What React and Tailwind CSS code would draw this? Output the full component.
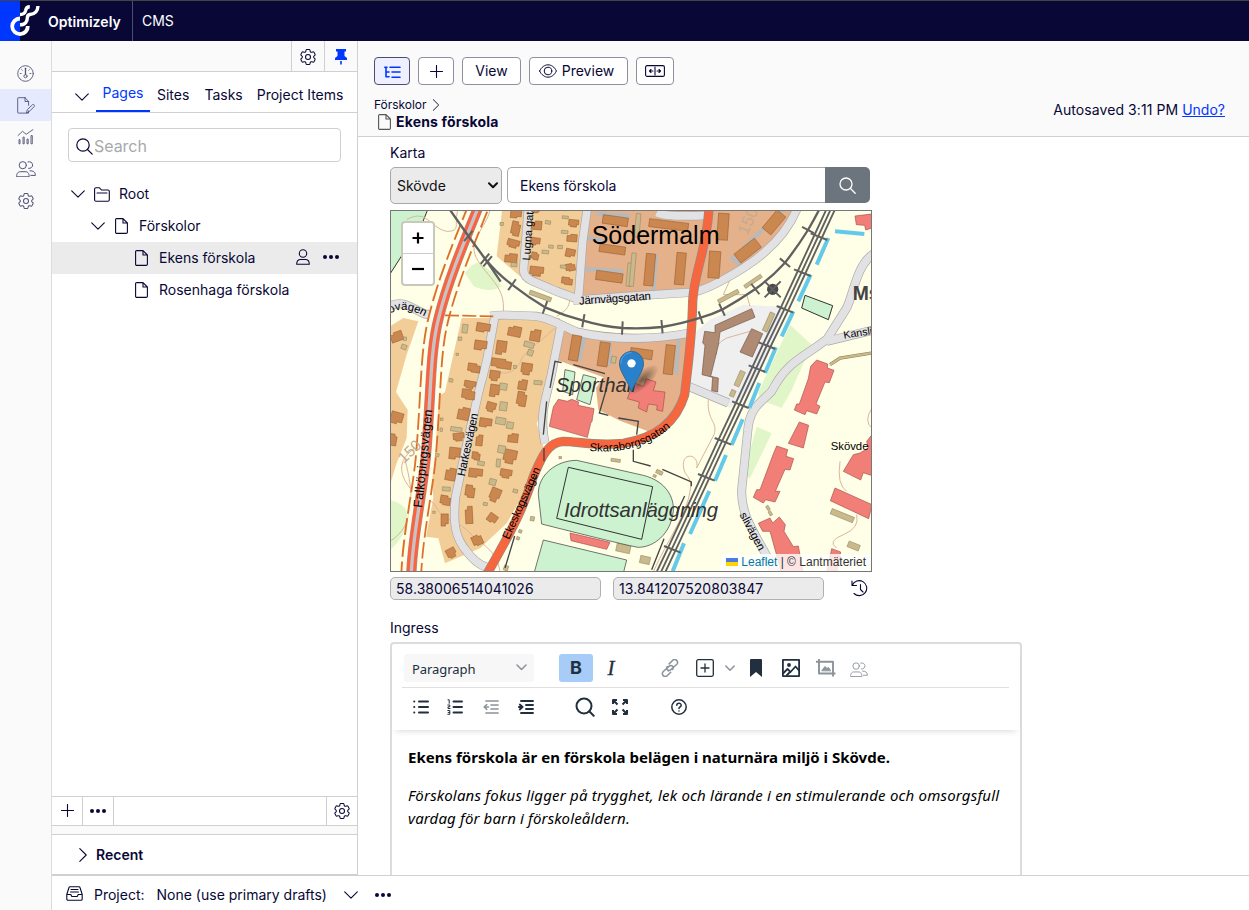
import React from "react";
import { HiOutlineCog6Tooth } from "react-icons/hi2";

const Gear = () => <HiOutlineCog6Tooth size={20} strokeWidth={1.2} className="[&_path]:[stroke-width:1.25]" />;

const Ico = ({ w = 16, h = 16, sw = 1.1, vb, className = "", children, fill = "none" }) => (
  <svg width={w} height={h} viewBox={vb || `0 0 ${w} ${h}`} className={`block shrink-0 ${className}`} fill={fill} stroke="currentColor" strokeWidth={sw} strokeLinecap="round" strokeLinejoin="round">
    {children}
  </svg>
);

const Page = ({ className }) => (
  <Ico w={13} h={16} className={className}><path d="M2.500.6H8L12.400 5v9a1.200 1.200 0 0 1-1.200 1.400H2A1.200 1.200 0 0 1 .6 14V2A1.200 1.200 0 0 1 2 .6zM8 .6V5h4.400" /></Ico>
);
const ChevD = ({ className }) => <Ico w={14} h={8} className={className}><path d="M.7.8 7 7.2 13.3.8" /></Ico>;
const ChevR = ({ className }) => <Ico w={8} h={14} className={className}><path d="M.8.7 7.2 7 .8 13.3" /></Ico>;
const Plus = () => <Ico w={13} h={13}><path d="M6.5.5v12M.5 6.5h12" /></Ico>;
const Dots = () => (
  <Ico w={16} h={4} fill="currentColor" sw={0}><circle cx="2" cy="2" r="2" /><circle cx="8" cy="2" r="2" /><circle cx="14" cy="2" r="2" /></Ico>
);
const Users = ({ w = 20, h = 16, className, sw = 1 }) => (
  <Ico w={w} h={h} vb="0 0 20 16" className={className} sw={sw}>
    <circle cx="6.8" cy="4.2" r="3.6" />
    <path d="M.6 15.4c0-3.6 1.8-4.7 4-4.7h4.6c2.2 0 4 1.1 4 4.7zM12 .9a3.4 3.4 0 1 1 .6 6.5M14 9.8c3 0 5.4 1 5.4 4.6h-4.6" />
  </Ico>
);
const Gauge = () => (
  <Ico w={17} h={17} sw={0.9}>
    <circle cx="8.500" cy="8.500" r="7.800" /><circle cx="8.500" cy="11.200" r="1.600" /><path d="M8.500 9.500V3.300" strokeWidth="1.300" /><path d="M3.200 8.500h.9M13 8.500h.9M4.700 4.700l.6.6M12.300 4.700l-.6.6" />
  </Ico>
);
const PageEdit = () => (
  <Ico w={18} h={17} sw={0.9}>
    <path d="M8 .7H1.300a.6.6 0 0 0-.6.6v14.200a.6.6 0 0 0 .6.6h10.200V14M8 .7l3.600 3.800v3.800M8 .7v3.800h3.600M9.500 15.500l.8-2.800 5.300-5.100c.9-.8 2.600.8 1.700 1.900L12 14.700z" />
  </Ico>
);
const Chart = () => (
  <Ico w={17} h={16} sw={0.9}>
    <path d="M1 6.500l4.500-4.200 3.700 3L16 .6M2 11v3.800h1V11zM6 8.500v6.300h1.200V8.500zM10 10.500v4.300h1.200v-4.300zM14 7v7.800h1.300V7z" />
  </Ico>
);

/* ---------- map data: [cx, cy, w, h, rotation] ---------- */
const houses = [
  [378, 18, 30, 22, 5], [377, 62, 24, 40, 12], [370, 107, 34, 22, 15], [363, 150, 34, 24, 5], [440, 52, 28, 24, 5], [436, 100, 26, 20, 8],
  [435, 144, 20, 20, 12], [440, 190, 38, 26, 6], [551, 46, 28, 20, 5], [546, 90, 28, 20, 5], [541, 135, 26, 22, 12], [541, 178, 26, 20, -10], [531, 219, 30, 20, 6], [437, 8, 22, 12, 0],
  [20, 386, 34, 26, -20], [280, 359, 38, 24, 10], [272, 412, 34, 26, 8], [252, 480, 34, 24, 8], [240, 530, 32, 20, 10], [374, 370, 36, 28, 12], [436, 382, 28, 32, 10],
  [334, 419, 28, 38, 8], [334, 467, 56, 26, 8], [314, 503, 28, 28, 8], [410, 483, 30, 32, 8], [398, 530, 24, 28, 10], [314, 548, 26, 34, 8], [235, 559, 36, 28, 6],
  [395, 573, 26, 40, 10], [303, 597, 26, 26, 16], [221, 617, 32, 34, 12], [287, 644, 34, 24, 8], [20, 630, 34, 32, 16], [8, 695, 22, 32, 10], [206, 687, 30, 22, -6],
  [268, 697, 18, 30, 6], [369, 690, 28, 24, 6], [194, 736, 30, 32, 6], [258, 744, 22, 22, 8], [360, 746, 36, 38, 12], [348, 797, 32, 24, 10], [182, 799, 28, 34, 10],
  [257, 795, 38, 24, 6], [240, 850, 26, 34, 8], [166, 877, 28, 26, 10], [315, 861, 28, 38, 22], [237, 921, 20, 48, -3], [164, 936, 20, 34, 0], [307, 931, 26, 24, 36],
  [262, 997, 28, 28, -25], [184, 1035, 26, 26, -28],
];
const sheds = [
  [335, 48, 10, 10, 0], [372, 170, 18, 12, 5], [474, 43, 16, 10, 10], [526, 28, 18, 8, 5], [524, 72, 20, 9, 5], [466, 132, 20, 10, 5], [510, 117, 15, 10, 5], [520, 176, 18, 9, 5], [483, 116, 14, 9, 5],
  [225, 362, 16, 26, 8], [42, 417, 16, 14, 20], [45, 392, 10, 10, 0], [417, 410, 30, 16, 15], [421, 434, 16, 18, 20], [210, 392, 11, 10, 0], [202, 439, 8, 7, 0], [183, 517, 11, 10, 10],
  [375, 477, 10, 9, 0], [340, 536, 22, 20, 8], [444, 524, 24, 12, 5], [340, 595, 22, 26, 8], [332, 639, 30, 20, 10], [360, 652, 20, 20, 10], [199, 664, 34, 13, 8], [155, 634, 8, 8, 0], [154, 665, 8, 10, 0],
  [335, 724, 22, 22, 12], [273, 766, 20, 12, 10], [325, 765, 12, 24, 5], [141, 741, 12, 9, 10], [169, 843, 24, 12, 4], [308, 822, 20, 18, 14], [376, 849, 14, 10, 14], [286, 888, 12, 9, 5],
  [132, 913, 7, 7, 0], [451, 264, 68, 13, 20], [671, 455, 14, 20, 10], [718, 200, 14, 70, 5], [743, 52, 14, 70, 5], [728, 185, 13, 100, 5], [1015, 265, 68, 12, -28], [1089, 220, 60, 11, -34],
  [1136, 342, 15, 60, 24], [1049, 512, 16, 48, 24], [1028, 556, 14, 20, 24], [677, 757, 28, 9, 8], [511, 749, 8, 7, 0], [700, 1021, 42, 24, 12], [427, 932, 12, 13, 10], [391, 970, 9, 9, 20],
  [384, 991, 9, 9, 20], [348, 1080, 13, 15, 20], [1357, 923, 72, 17, 22], [1391, 1014, 36, 18, 22], [808, 793, 20, 11, 25], [794, 804, 9, 7, 25], [765, 1056, 30, 22, 12], [1134, 900, 8, 14, -30], [1141, 916, 8, 14, -30],
];
const blocks = [
  [676, 38, 76, 26, 8], [667, 124, 78, 24, 8], [658, 206, 80, 28, 8], [836, 51, 118, 24, 7], [779, 185, 28, 96, 5], [871, 182, 28, 96, 5], [973, 170, 34, 80, 4], [999, 56, 32, 80, 4],
  [1152, 43, 34, 70, 40], [1073, 128, 78, 34, -38], [555, 420, 28, 76, 10], [641, 439, 30, 72, 8], [754, 437, 66, 28, 8], [838, 455, 28, 88, 6],
];
const Rects = ({ data, fill, stroke }) => data.map(([x, y, w, h, r], i) => (
  <rect key={i} x={x - w / 2} y={y - h / 2} width={w} height={h} transform={`rotate(${r} ${x} ${y})`} fill={fill} stroke={stroke} strokeWidth="1.500" />
));
/* house outlines: a rectangle with one or two notched corners */
const shapes = [
  "M-.5-.5H.5V.3H.1V.5H-.5z",
  "M-.5-.3H-.15V-.5H.5V.5H-.5z",
  "M-.5-.5H.5V.15H.3V.5H-.3V.3H-.5z",
  "M-.5-.5H.2V-.3H.5V.5H-.2V.35H-.5z",
];
const Houses = () => houses.map(([x, y, w, h, r], i) => (
  <path key={i} d={shapes[(i * 7 + (i >> 2)) % 4]} transform={`translate(${x} ${y}) rotate(${r}) scale(${w * 1.08} ${h * 1.08})`} fill="#cb8750" stroke="#8d5526" strokeWidth="0.5" vectorEffect="non-scaling-stroke" />
));
const ticksArc = [[235, 84, 40], [285, 152, 40], [293, 160, 40], [366, 230, 35], [465, 298, 20], [580, 338, 10], [697, 360, 3], [816, 356, -5], [932, 329, -18], [996, 305, -25], [1096, 243, -38], [1185, 164, -50], [1254, 66, -62]];
const ticksMain = [[1290, 84], [1240, 192], [1188, 302], [1134, 411], [1104, 480], [1054, 588], [1002, 698], [952, 806], [850, 1022]];
const arcRail = "M176 0L235 84 285 152Q320 195 366 230Q415 268 465 298Q520 322 580 338Q640 356 697 360Q760 363 816 357Q880 346 932 329Q965 320 996 305Q1050 275 1096 243Q1145 208 1185 164Q1220 120 1254 66Q1275 30 1290 0";
const mainRail = "M1324 0L1285 84 1235 192 1184 302 1131 411 1099 480 1049 588 997 698 947 806 846 1022 812 1094";
const greyRoads = [
  "M415 0L401 180Q398 206 425 218L500 250 560 272", "M592 0L578 100 565 275", "M550 277L760 262 905 253Q950 248 1060 180C1130 135 1190 80 1222 0",
  "M303 324Q320 318 440 325C480 330 520 355 560 372C640 390 760 400 895 376", "M315 322L290 460 265 556 220 756 196 870C190 940 192 985 230 1030Q260 1070 292 1078",
  "M512 358L482 510C465 580 448 620 465 706", "M0 295C40 272 70 305 105 318L145 322", "M1450 138C1400 170 1390 260 1370 300L1312 392C1240 450 1190 460 1145 550C1110 585 1078 600 1073 670L1055 846C1052 930 1100 980 1160 1100",
  "M1310 400L1450 366", "M800 14Q830 28 950 22", "M895 535L1015 585",
];
const redRoad = "M957 0C950 130 912 190 908 280C906 400 890 500 884 560C860 640 800 690 700 706C620 715 560 700 520 700C470 702 450 760 430 806C400 900 370 960 292 1096";
const falk = "M264 0C215 120 170 230 146 330C120 430 124 550 108 740C100 840 68 980 64 1096";
const blue = "M1315 90L1280 170M1262 200L1225 280M1210 310L1175 385M1158 418L1125 495M1108 525L1078 600M1058 634L1025 711M1008 741L975 818M958 849L900 978M882 1006L848 1090M1335 70L1423 78";

const MapDrawing = () => (
  <svg viewBox="3 9 1440 1080" className="block h-[360px] w-[480px]" fontFamily="'Liberation Sans', Arial, sans-serif">
    <defs><radialGradient id="shade"><stop offset="0" stopColor="#000" stopOpacity=".5" /><stop offset="1" stopColor="#000" stopOpacity="0" /></radialGradient></defs>
    <rect x="0" y="0" width="1446" height="1096" fill="#fffee6" />
    <path d="M0 0H115L95 50 0 198z" fill="#cdf2d0" stroke="#333" strokeWidth="3" />
    <g fill="#e1f6c8">
      <path d="M205 0H250L232 25z" /><path d="M225 195Q250 160 270 165L310 195 335 235Q300 258 250 233z" /><path d="M1200 350L1265 410 1205 546 1175 600 1110 575 1105 552z" />
      <path d="M1100 656L1145 676 1080 811 1060 800z" /><path d="M0 876Q60 890 52 940T0 1026z" />
    </g>
    <g fill="#f2cd98">
      <path d="M337 0H590V270L560 272 460 245 390 205 320 145z" />
      <path d="M0 355L40 330 85 340 50 440 18 552 53 606 50 690 20 765 0 830z" />
      <path d="M215 330H510L485 552 440 646 460 716 430 806 350 946 270 1021 165 1066 145 991 108 986 130 870 120 706 138 570 165 552 190 440z" />
    </g>
    <g fill="#e5b18b">
      <path d="M590 0H1215C1180 90 1120 150 1060 180 980 230 950 250 905 253L565 275z" /><path d="M525 365L900 390 890 546C860 620 820 660 780 672L690 638 625 605 618 540 640 508 500 455z" />
    </g>
    <path d="M905 380L960 335 1060 290 1190 297 1145 400 1075 552 1020 600 890 540z" fill="#efeff0" />
    <g fill="none" stroke="#d9b69c" strokeWidth="3">
      <path d="M205 0C190 50 215 70 170 70C120 60 110 0 50 35M300 6C290 60 225 100 265 160S345 240 340 310M560 250C520 280 560 290 500 325M495 360C430 420 400 430 390 465Q370 500 330 495M590 240Q620 250 640 205L690 160" />
      <path d="M75 720C30 750 20 790 60 840S120 860 140 900S210 940 240 975S320 1020 330 1092M45 755C70 850 80 950 0 1000M1020 60L1025 160M1080 370L1010 390Q970 410 980 440M1080 295L1070 260 1000 260 1018 220" />
      <path d="M955 575C950 640 985 640 972 680L920 780C930 740 880 730 880 770S910 800 900 850C890 920 830 1000 790 1092M1446 600Q1420 640 1446 660M1350 760Q1340 830 1370 850M1400 920Q1410 960 1360 980T1340 1020" />
    </g>
    <g stroke="#b9b9b9" strokeWidth="13" fill="none"><path d="M620 18L720 24M590 90L640 98M585 183L700 190M798 140L790 248M582 388L568 458M660 405L655 475M866 395L858 500M1022 145L1050 170M1060 120L1180 6" /></g>
    <g fill="none" stroke="#a9a9a9" strokeWidth="27">{greyRoads.map((d) => <path key={d} d={d} />)}</g>
    <g fill="none" stroke="#e2e2e4" strokeWidth="23">{greyRoads.map((d) => <path key={d} d={d} />)}</g>
    <Houses />
    <Rects data={sheds} fill="#c9b98c" stroke="#8e8058" />
    <Rects data={blocks} fill="#cb8750" stroke="#8d5526" />
    <g fill="#b08b74" stroke="#76553f" strokeWidth="2">
      <path d="M975 352L1085 302 1095 328 990 372 985 412 962 505 985 510 983 552 965 548 968 508 936 500 945 412 938 405 944 370 975 374z" /><path d="M1085 362L1118 377 1087 447 1050 432z" />
    </g>
    <path d="M1320 470L1350 450 1446 435" fill="none" stroke="#8e8058" strokeWidth="10" /><path d="M1320 470L1350 450 1446 435" fill="none" stroke="#c9b98c" strokeWidth="7" />
    <g fill="#cdf2d0" stroke="#333" strokeWidth="2">
      <path d="M525 485L555 492 548 560 518 550zM580 500L618 510 600 590 560 575z" /><path d="M1245 262L1328 293 1315 335 1235 300z" strokeWidth="3" />
      <path d="M455 948L445 860C443 800 500 757 560 757L760 802C830 820 853 870 850 910C842 980 790 1018 745 1018Q720 1015 455 948z" /><path d="M535 778L788 836 755 994 500 931z" strokeWidth="3" /><path d="M460 996L710 1056 700 1096H432z" />
    </g>
    <g fill="#f17f78" stroke="#a84f49" strokeWidth="2">
      <path d="M490 597L505 574 532 580 545 574 566 582 564 592 612 602 606 640 602 646 592 688 478 655z" />
      <path d="M540 975L660 1003 650 1024 543 998z" />
      <path d="M712 572L730 524 760 535 768 512 798 522 790 548 825 552 818 610 800 606 802 592 775 588 770 612 745 600 748 582z" />
      <path d="M1395 24L1446 18V60L1427 66 1424 52 1399 50z" />
      <path d="M1280 456L1313 468 1312 480 1332 487 1318 524 1305 522 1278 588 1290 595 1280 618 1250 608 1245 620 1213 606 1220 588 1228 588 1255 512 1262 475z" />
      <path d="M1228 642L1256 652 1240 720 1195 706z" />
      <path d="M1160 714L1193 725 1188 745 1211 752 1200 786 1185 784 1156 850 1170 850 1155 882 1127 875 1120 885 1090 868 1100 845 1110 845 1150 738z" />
      <path d="M1105 946L1140 930 1148 945 1168 927 1186 950 1182 970 1210 1016 1225 1014 1240 1096H1175L1140 970 1118 970z" />
      <path d="M1446 680L1430 700 1435 720 1410 735 1390 740 1360 790 1412 816 1420 794 1446 803z" />
      <path d="M1335 840L1446 890 1436 932 1321 878z" /><path d="M1325 1022L1352 1032 1340 1096H1310z" />
    </g>
    <path d={falk} fill="none" stroke="#dd6f2c" strokeWidth="65" strokeDasharray="50 14" />
    <path d={falk} fill="none" stroke="#fffee6" strokeWidth="54" />
    <path d={falk} fill="none" stroke="#9a9a9a" strokeWidth="31" /><path d={falk} fill="none" stroke="#fb6240" strokeWidth="28" /><path d={falk} fill="none" stroke="#c9c2c4" strokeWidth="10" />
    <path d="M165 322L310 325" stroke="#dd6f2c" strokeWidth="5" strokeDasharray="42 10" />
    <path d={redRoad} fill="none" stroke="#8e8e8e" strokeWidth="28" /><path d={redRoad} fill="none" stroke="#f6663f" strokeWidth="24" />
    <path d={blue} fill="none" stroke="#62c9ea" strokeWidth="12" />
    <g fill="none" stroke="#606060">
      <path d={arcRail} strokeWidth="7" /><path d="M285 152L332 221" strokeWidth="7" />
      <path d={mainRail} strokeWidth="5.500" transform="translate(-13 0)" /><path d={mainRail} strokeWidth="5.500" /><path d={mainRail} strokeWidth="5.500" transform="translate(13 0)" />
      {ticksArc.map(([x, y, r]) => <path key={x} d={`M${x} ${y - 20}v40`} transform={`rotate(${r} ${x} ${y})`} strokeWidth="6" />)}
      {ticksMain.map(([x, y]) => <path key={x} d={`M${x - 28} ${y - 8}l50 20`} strokeWidth="6" />)}
      <circle cx="1148" cy="244" r="17" fill="#4a4a4a" stroke="none" /><path d="M1124 220L1172 268M1172 220L1124 268" strokeWidth="6" />
    </g>
    <g fill="none" stroke="#444" strokeWidth="4">
      <path d="M480 540L495 460 515 464M550 470L645 497M470 580L460 680M462 720V760M650 540L628 615 655 622M685 630L745 640 740 680M730 725V760L782 774M817 784L904 822V835M884 864L860 915M374 984L345 1080M822 992L785 1085" />
      <path d="M400 900L440 800" />
    </g>
    <g fontSize="34">
      <text x="605" y="107" fontSize="75">Södermalm</text>
      <text x="0" y="0" fontSize="33" transform="translate(420 158) rotate(-86)">Lugna gat</text>
      <text transform="translate(568 290) rotate(-4)" fontSize="34" textLength="216">Järnvägsgatan</text>
      <path id="ov" d="M0 317Q45 286 125 338" fill="none" /><text fontSize="34"><textPath href="#ov" textLength="110">ovägen</textPath></text>
      <text transform="translate(1362 392) rotate(-9)" fontSize="32">Kansli</text>
      <text transform="translate(96 900) rotate(-84)" fontSize="38" textLength="296">Falköpingsvägen</text>
      <text transform="translate(224 806) rotate(-78)" fontSize="34" textLength="192">Harkesvägen</text>
      <text transform="translate(357 996) rotate(-66)" fontSize="34" textLength="232">Ekeskogsvägen</text>
      <path id="sk" d="M598 729C700 736 775 720 856 646" fill="none" /><text fontSize="34"><textPath href="#sk" textLength="262">Skaraborgsgatan</textPath></text>
      <text transform="translate(1048 920) rotate(62)" fontSize="34">slivägen</text>
      <text x="1322" y="726" fontSize="34">Skövde</text>
      <text x="1388" y="276" fontSize="58" fontWeight="bold" fill="#444">Ms</text>
      <g fill="#c5ab91" fontSize="50"><text transform="translate(1072 84) rotate(-66)">150</text><text transform="translate(42 768) rotate(-44)" fontSize="46">150</text></g>
      <g fontStyle="italic" fill="#333" fontSize="61"><text x="497" y="553">Sporthall</text><text x="522" y="927" textLength="462">Idrottsanläggning</text></g>
    </g>
    <ellipse cx="757" cy="515" rx="62" ry="26" transform="rotate(-42 757 515)" fill="url(#shade)" />
    <g transform="translate(687 429)">
      <path d="M37.500 1.500C15 1.500 1.500 19 1.500 38 1.500 62 24 85 37.500 121.500 51 85 73.500 62 73.500 38 73.500 19 60 1.500 37.500 1.500z" fill="#2a81cb" stroke="#2e6c97" strokeWidth="3" />
      <path d="M37.500 5C17 5 5.500 21 5.500 38" fill="none" stroke="#5aa2dc" strokeWidth="3" /><circle cx="37.500" cy="37" r="12.500" fill="#fff" />
    </g>
  </svg>
);

const tbtn = "flex h-7 items-center justify-center rounded-[4px] border border-[#8f8fa0] bg-white";

export default function App() {
  return (
    <div className="flex h-[910px] w-[1249px] flex-col overflow-hidden bg-white font-['Inter',sans-serif] text-[14px] leading-5 text-[#080736]">
      <header className="flex h-[41px] shrink-0 border-t border-[#434343] bg-[#080736] text-white">
        <svg width="40" height="40" viewBox="0 0 40 40" className="block" fill="none">
          <path d="M0 0h20v40H0z" fill="#0037ff" />
          <path d="M20 17.500A7.800 7.800 0 1 0 27.800 25" stroke="#fff" strokeWidth="3.800" />
          <path d="M20 23.800C25.500 23.800 27.300 20 27.300 17C27.300 15 28 13.800 30 13.500C35.500 13 37.800 9.500 38 5M20 13.500C24 13.500 25.200 11.500 25.600 9.500C26 7 27.500 5.800 29.800 5.800" stroke="#fff" strokeWidth="3.400" />
        </svg>
        <div className="flex w-[93px] items-center border-r border-[#4d4c6e] pl-2 pt-[2px] text-[14px] font-semibold tracking-[0.040px]">Optimizely</div>
        <div className="flex items-center pl-[9px]">CMS</div>
      </header>

      <div className="flex min-h-0 flex-1">
        <nav className="flex w-[52px] shrink-0 flex-col border-r border-[#dcdcdc] bg-[#fafafa] pt-4 text-[#54537a]">
          <div className="flex h-8 items-center justify-center"><Gauge /></div>
          <div className="flex h-8 items-center justify-center bg-[#e6eaff]"><PageEdit /></div>
          <div className="flex h-8 items-center justify-center"><Chart /></div>
          <div className="flex h-8 items-center justify-center"><Users /></div>
          <div className="flex h-8 items-center justify-center"><Gear /></div>
        </nav>

        <div className="flex min-w-0 flex-1 flex-col">
          <div className="flex min-h-0 flex-1">
            <aside className="flex w-[306px] shrink-0 flex-col border-r border-[#d0d0d0] bg-white">
              <div className="flex h-[31px] shrink-0 justify-end border-b border-[#d0d0d0] bg-[#fafafa]">
                <div className="flex w-[33px] items-center justify-center border-l border-[#d0d0d0] pt-px"><Gear /></div>
                <div className="flex w-[33px] items-center justify-center border-l border-[#d0d0d0] pt-[2px] text-[#0037ff]">
                  <Ico w={12} h={16} fill="currentColor" sw={0}><path d="M1 0h10v2.500H9.500V7L12 9v2H0V9l2.500-2V2.500H1zM5.200 12h1.600v3L6 16l-.8-1z" /></Ico>
                </div>
              </div>
              <div className="flex h-[41px] shrink-0 border-b border-[#d0d0d0] pl-[23px]">
                <ChevD className="mt-[21px]" />
                <div className="ml-[7px] h-10 w-[54px] border-b-2 border-[#0037ff] pt-[11px] text-center text-[#0037ff]">Pages</div>
                <div className="ml-[7px] pt-[13px]">Sites</div>
                <div className="ml-[15px] pt-[13px]">Tasks</div>
                <div className="ml-[14px] whitespace-nowrap pt-[13px]">Project Items</div>
              </div>
              <div className="mx-4 mt-[15px] flex h-[34px] w-[273px] shrink-0 items-center rounded-[4px] border border-[#d0d0d0] pl-[7px] pt-px text-[16px] tracking-[-0.050px] text-[#a9a9a9]">
                <Ico w={17} h={17} className="mr-px mt-[2px] text-[#080736]" sw={1.2}><circle cx="7" cy="7" r="6.200" /><path d="M11.500 11.500l4.700 4.700" /></Ico>
                Search
              </div>
              <div className="mt-4 flex flex-1 flex-col">
                <div className="flex h-8 items-center pl-[19px]"><ChevD /><Ico w={16} h={15} className="ml-[9px]"><path d="M.6 2A1.300 1.300 0 0 1 2 .8h3.500L7.500 3H14a1.300 1.300 0 0 1 1.300 1.300V13A1.300 1.300 0 0 1 14 14.200H2A1.300 1.300 0 0 1 .6 13zM3 6h10" /></Ico><span className="ml-[9px]">Root</span></div>
                <div className="flex h-8 items-center pl-[39px]"><ChevD /><Page className="ml-[10px]" /><span className="ml-[11px]">Förskolor</span></div>
                <div className="flex h-8 items-center bg-[#ebebeb] pl-[84px]">
                  <Page className="-ml-px" /><span className="ml-[11px] flex-1">Ekens förskola</span>
                  <Ico w={14} h={16} className="-mt-[2px] mr-[13px]"><circle cx="7" cy="4.500" r="3.700" /><path d="M.7 15.200c0-3.500 1.800-4.700 4-4.700h4.600c2.200 0 4 1.200 4 4.700z" /></Ico><div className="-mt-[2px] mr-[18px]"><Dots /></div>
                </div>
                <div className="flex h-8 items-center pl-[84px]"><Page className="-ml-px" /><span className="ml-[11px]">Rosenhaga förskola</span></div>
              </div>
              <div className="flex h-[30px] shrink-0 border-y border-[#d0d0d0]">
                <div className="flex w-[31px] items-center justify-center border-r border-[#d0d0d0] pb-px"><Plus /></div>
                <div className="flex w-[31px] items-center justify-center border-r border-[#d0d0d0]"><Dots /></div>
                <div className="ml-auto flex w-[31px] items-center justify-center border-l border-[#d0d0d0]"><Gear /></div>
              </div>
              <div className="h-2 shrink-0 bg-[#fafafa]" />
              <div className="flex h-[41px] shrink-0 items-center border-y border-[#d0d0d0] pl-[27px] font-semibold"><ChevR /><span className="ml-[9px]">Recent</span></div>
            </aside>

            <main className="flex min-w-0 flex-1 flex-col">
              <div className="flex h-24 shrink-0 flex-col border-b border-[#d0d0d0] bg-[#fafafa] pl-4 pt-4">
                <div className="flex gap-2">
                  <div className="flex h-7 w-9 items-center justify-center rounded-[4px] border border-[#4d4c6e] bg-[#eef0ff] pt-[2px] text-[#0037ff]">
                    <Ico w={17} h={13} sw={1.600}><path d="M.8 1.200H3M2 1.200V10.800H5M2 6h3M6 1.200h10M8 6h8M8 11.300h8" /></Ico>
                  </div>
                  <div className={`${tbtn} w-9 pt-px`}><Plus /></div>
                  <div className={`${tbtn} w-[59px]`}>View</div>
                  <div className={`${tbtn} w-[99px] gap-[5px] pr-1`}><Ico w={18} h={14} sw={1}><path d="M.6 7C4.500-1.300 13.500-1.300 17.400 7 13.500 15.300 4.500 15.300.6 7z" /><circle cx="9" cy="7" r="3.800" /></Ico>Preview</div>
                  <div className={`${tbtn} w-[38px]`}><Ico w={20} h={12}><rect x=".6" y=".6" width="18.800" height="10.800" rx="1.500" /><path d="M10 2v8M4.500 6H8M12 6h3.500M6 4.500L4.500 6l1.500 1.500M14 4.500L15.500 6l-1.500 1.500" /></Ico></div>
                </div>
                <div className="flex justify-between pt-[13px]">
                  <div>
                    <div className="flex h-[14px] items-center text-[12px] tracking-[-0.040px]">Förskolor<ChevR className="ml-[6px] scale-[.85]" /></div>
                    <div className="flex h-5 items-center pl-1 font-bold tracking-[0.160px]"><Page className="mr-[5px] text-[#555]" />Ekens förskola</div>
                  </div>
                  <div className="mr-6 pt-[2px] tracking-[0.070px]">Autosaved 3:11 PM <span className="tracking-normal text-[#0037ff] underline">Undo?</span></div>
                </div>
              </div>

              <div className="flex min-h-0 flex-1 flex-col overflow-hidden pl-8 pt-[6px]">
                <div className="h-5 shrink-0">Karta</div>
                <div className="mt-1 flex h-[37px] shrink-0">
                  <div className="flex h-[37px] w-28 items-center justify-between rounded-[5px] border border-[#a8a8a8] bg-[#ebebeb] pl-[6px] pr-[3px] text-[#111]">Skövde<Ico w={10} h={7} sw={2}><path d="M1 1.200l4 4 4-4" /></Ico></div>
                  <div className="ml-[5px] flex h-9 w-[318px] items-center rounded-l-[5px] border border-r-0 border-[#a8a8a8] pl-3 pt-[2px]">Ekens förskola</div>
                  <div className="flex h-9 w-[45px] items-center justify-center rounded-r-[5px] bg-[#6c757d] pr-px text-white"><Ico w={17} h={17} sw={1.300}><circle cx="7" cy="7" r="6" /><path d="M11.500 11.500l4.700 4.700" /></Ico></div>
                </div>
                <div className="relative mt-[6px] h-[362px] w-[482px] shrink-0 border border-[#777]">
                  <MapDrawing />
                  <div className="absolute left-[10px] top-[10px] flex w-[34px] flex-col rounded-[4px] border-2 border-[#c9c9bb] bg-white text-black">
                    <div className="flex h-[31px] items-center justify-center border-b border-[#ccc]"><Ico w={12} h={12} sw={2.200}><path d="M6 .5v11M.5 6h11" strokeLinecap="butt" /></Ico></div>
                    <div className="flex h-[30px] items-center justify-center"><Ico w={12} h={12} sw={2.200}><path d="M0 6h12" strokeLinecap="butt" /></Ico></div>
                  </div>
                  <div className="absolute bottom-0 right-0 flex h-[17px] items-center bg-white/80 px-[5px] pb-[2px] font-['Liberation_Sans',sans-serif] text-[12px] text-[#333]">
                    <svg width="12" height="8" className="mr-[3px] block"><path d="M0 0h12v4H0z" fill="#4c7be1" /><path d="M0 4h12v4H0z" fill="#ffd500" /></svg>
                    <span className="text-[#0078a8]">Leaflet</span>&nbsp;| © Lantmäteriet
                  </div>
                </div>
                <div className="mt-[5px] flex h-[23px] shrink-0">
                  <div className="flex w-[211px] items-center rounded-[5px] border border-[#b0b0b0] bg-[#ebebeb] pl-[5px] pt-px tracking-[0.050px]">58.38006514041026</div>
                  <div className="ml-3 flex w-[211px] items-center rounded-[5px] border border-[#b0b0b0] bg-[#ebebeb] pl-[5px] pt-px tracking-[0.050px]">13.841207520803847</div>
                  <Ico w={18} h={17} className="ml-[27px] mt-[3px]"><path d="M1 1v4.500h4.500M1.300 5.300A7.500 7.500 0 1 1 3 13.500M9.500 4.500v5l2.500 2.500" /></Ico>
                </div>
                <div className="mt-[18px] h-5 shrink-0">Ingress</div>
                <div className="mt-1 flex h-[260px] w-[632px] shrink-0 flex-col rounded-[4px] border-2 border-[#dcdcdc] text-[#222f3e]">
                  <div className="flex h-[86px] shrink-0 flex-col shadow-[0_5px_6px_-4px_rgba(34,47,62,.18)]">
                    <div className="ml-[10px] mr-[11px] flex h-11 shrink-0 items-center border-b border-[#dfdfdf] pt-[5px]">
                      <div className="ml-[2px] flex h-7 w-[130px] items-center justify-between rounded-[3px] bg-[#f7f7f7] pl-2 pr-[7px] pt-[2px] font-['Noto_Sans',sans-serif] text-[13px] tracking-[-0.060px]">Paragraph<Ico w={11} h={7} sw={1.500} className="-mt-1 text-[#8c939b]"><path d="M1 1l4.500 4.500L10 1" /></Ico></div>
                      <div className="ml-[25px] flex h-7 w-[34px] items-center justify-center rounded-[3px] bg-[#a6ccf7] text-[18px] font-bold">B</div>
                      <div className="ml-[9px] flex w-[18px] justify-center font-['Liberation_Serif',serif] text-[21px] italic [-webkit-text-stroke:.3px]">I</div>
                      <Ico w={18} h={18} vb="2 2 20 20" sw={1.700} className="ml-[41px] text-[#8c939b]"><path d="M10.300 15.200l-1.200-1.200a2.600 2.600 0 0 1 0-3.700M9.100 14a2.600 2.600 0 0 0 3.700 0l6.800-6.200a3.200 3.200 0 0 0-4.500-4.500L11 7.400M14.800 9.900a2.600 2.600 0 0 0-3.700 0L4.300 16.200a3.200 3.200 0 0 0 4.500 4.500l4-4M14.800 9.900a2.600 2.600 0 0 1 0 3.700" /></Ico>
                      <Ico w={18} h={18} sw={1.300} className="ml-[17px]"><rect x=".7" y=".7" width="16.600" height="16.600" rx="1.500" /><path d="M9 5v8M5 9h8" /></Ico>
                      <Ico w={10} h={7} sw={1.500} className="ml-[11px] text-[#8c939b]"><path d="M.8 1L5 5.300 9.200 1" /></Ico>
                      <Ico w={12} h={18} fill="currentColor" sw={0} className="ml-[15px]"><path d="M0 1q0-1 1-1h10q1 0 1 1v17l-6-5-6 5z" /></Ico>
                      <Ico w={18} h={18} sw={1.800} className="ml-5"><rect x=".9" y=".9" width="16.200" height="16.200" /><path d="M1.500 14l4-4 3 3 5-5.500 3.500 4M5 16l3-3" /><circle cx="7" cy="6" r="1" fill="currentColor" /></Ico>
                      <Ico w={20} h={18} sw={1.900} className="ml-[16px] text-[#8c939b]"><path d="M3 0v14.500h16.500M0 2.700h17V17.500" strokeLinecap="butt" /><path d="M6 11.500l3-4 2 2 1.500-1 2 3z" fill="currentColor" strokeWidth="1" /></Ico>
                      <Users w={18} h={15} sw={1} className="ml-[14px] mt-[2px] text-[#8c939b]" />
                    </div>
                    <div className="flex h-[38px] items-center pl-[21px]">
                      <Ico w={16} h={14} sw={2}><path d="M6 1.500h9M6 7h9M6 12.500h9M1.200 1.500h.1M1.200 7h.1M1.200 12.500h.1" /></Ico>
                      <Ico w={16} h={16} sw={1.900} className="ml-[18px]"><path d="M6.500 2.500h8.500M6.500 8h8.500M6.500 13.500h8.500" /><path d="M1 .8h1.200v3.500M.8 6h2v1.800H1V9.500h2M.8 11.500h2v3.800h-2M1.200 13.400h1.500" strokeWidth="1" /></Ico>
                      <Ico w={16} h={14} sw={1.700} className="ml-[20px] text-[#8c939b]"><path d="M3 1h12M8 5h7M8 9h7M3 13h12" /><path d="M3.800 4.500L1.200 7l2.600 2.500M2 7h3.500" strokeWidth="1.500" /></Ico>
                      <Ico w={16} h={14} sw={1.900} className="ml-[19px]"><path d="M3 1h12M8 5h7M8 9h7M3 13h12" /><path d="M1.800 4.500L4.600 7l-2.800 2.500M.8 7h3" strokeWidth="1.800" /></Ico>
                      <Ico w={20} h={20} sw={2} className="ml-[41px]"><circle cx="9" cy="9" r="7.500" /><path d="M14.200 14.200l4.500 4.500" /></Ico>
                      <Ico w={16} h={16} sw={2} className="ml-[17px]"><path d="M1 5V1h4M1 1l4.500 4.500M11 1h4v4M15 1l-4.500 4.500M1 11v4h4M1 15l4.500-4.500M11 15h4v-4M15 15l-4.500-4.500" strokeLinecap="butt" /></Ico>
                      <Ico w={16} h={16} sw={1.500} className="ml-[43px]"><circle cx="8" cy="8" r="7.200" /><path d="M5.800 6.300C5.800 3.600 10.200 3.600 10.200 6.200 10.200 7.800 8 7.800 8 9.500M8 11.900v.1" /></Ico>
                    </div>
                  </div>
                  <div className="px-4 pt-4 font-['Noto_Sans',sans-serif] text-[15px] leading-[23px] text-black">
                    <p className="whitespace-nowrap font-bold tracking-[0.020px]">Ekens förskola är en förskola belägen i naturnära miljö i Skövde.</p>
                    <p className="mt-[15px] whitespace-nowrap italic tracking-[0.200px]">Förskolans fokus ligger på trygghet, lek och lärande i en stimulerande och omsorgsfull<br /><span className="tracking-[0.140px]">vardag för barn i förskoleåldern.</span></p>
                  </div>
                </div>
              </div>
            </main>
          </div>
          <footer className="flex h-[35px] shrink-0 items-center border-t border-[#d0d0d0] bg-white pl-[14px] pt-[4px]">
            <Ico w={17} h={15} className="-mt-1"><path d="M.8 8.500L3 1.500q.2-.8 1-.8h9q.8 0 1 .8l2.200 7V13q0 1.300-1.300 1.300H2Q.8 14.300.8 13zM.8 8.500h4l1 2h5.400l1-2h4M5 3.500h7M4.500 6h8" /></Ico>
            <span className="ml-[11px]">Project:</span><span className="ml-3">None (use primary drafts)</span><ChevD className="ml-[17px]" /><div className="ml-[17px]"><Dots /></div>
          </footer>
        </div>
      </div>
    </div>
  );
}
